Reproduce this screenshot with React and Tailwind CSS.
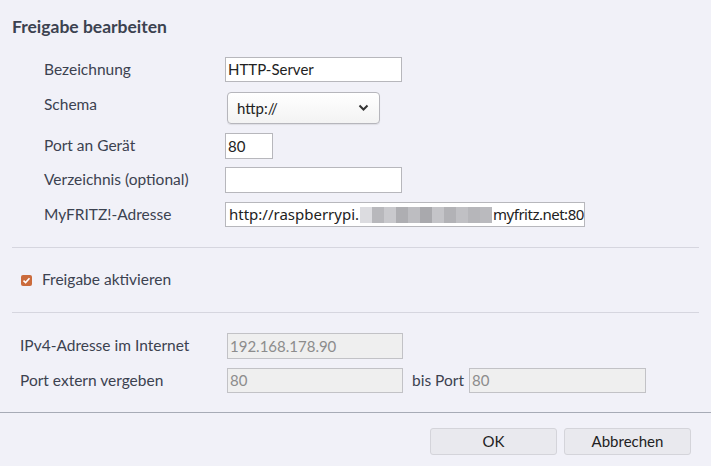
import React from "react";

function Label({ children, className = "" }) {
  return <div className={`text-[15.5px] text-[#3c4250] ${className}`}>{children}</div>;
}

function TextBox({ value, className = "", disabled }) {
  return (
    <div
      className={`border flex items-center px-[2px] text-[15px] ${
        disabled
          ? "bg-[#efefef] border-[#c2c2c6] text-[#8c8c8c]"
          : "bg-white border-[#b7b7bc] text-[#222]"
      } ${className}`}
    >
      {value}
    </div>
  );
}

function Pixelated() {
  const blocks = [
    "bg-[#dcdce0]",
    "bg-[#b8b8bc]",
    "bg-[#c9c9cd]",
    "bg-[#aeaeb2]",
    "bg-[#bdbdc1]",
    "bg-[#a9a9ad]",
    "bg-[#c4c4c8]",
    "bg-[#b2b2b6]",
    "bg-[#c0c0c4]",
    "bg-[#b6b6ba]",
    "bg-[#bababe]",
  ];
  return (
    <div className="flex h-[16px] mx-[1px]">
      {blocks.map((b, i) => (
        <div key={i} className={`w-[12px] h-full ${b}`} />
      ))}
    </div>
  );
}

export default function App() {
  return (
    <div
      className="w-[711px] h-[466px] bg-[#f1f1f8] text-[#3c4250] overflow-hidden"
      style={{ fontFamily: '"Source Sans Pro", Lato, "Noto Sans", sans-serif' }}
    >
      <div className="h-[44px] pt-[15px] pl-[12px] text-[17.5px] font-bold leading-[24px]">
        Freigabe bearbeiten
      </div>

      <div className="pl-[44px] pt-[13px] flex flex-col">
        <div className="flex items-center h-[25px]">
          <Label className="w-[181px]">Bezeichnung</Label>
          <TextBox value="HTTP-Server" className="w-[177px] h-[25px]" />
        </div>

        <div className="flex items-center h-[32px] mt-[10px]">
          <Label className="w-[183px] -mt-[6px]">Schema</Label>
          <div className="w-[153px] h-[32px] rounded-[4px] border border-[#b6b6bc] bg-gradient-to-b from-white to-[#f3f3f3] flex items-center justify-between pl-[9px] pr-[10px] text-[15px] text-[#222] shadow-[0_1px_1px_rgba(0,0,0,0.08)]">
            <span>http://</span>
            <svg width="11" height="8" viewBox="0 0 11 8">
              <path d="M1.5 1.5 L5.5 5.5 L9.5 1.5" fill="none" stroke="#333" strokeWidth="2" />
            </svg>
          </div>
        </div>

        <div className="flex items-center h-[26px] mt-[9px]">
          <Label className="w-[181px] -mt-[1px]">Port an Gerät</Label>
          <TextBox value="80" className="w-[48px] h-[26px]" />
        </div>

        <div className="flex items-center h-[26px] mt-[8px]">
          <Label className="w-[181px]">Verzeichnis (optional)</Label>
          <TextBox value="" className="w-[177px] h-[26px]" />
        </div>

        <div className="flex items-center h-[25px] mt-[9px]">
          <Label className="w-[181px]">MyFRITZ!-Adresse</Label>
          <div
            className="w-[360px] h-[25px] border border-[#b7b7bc] bg-white flex items-center px-[3px] text-[15px] text-[#222]"
            style={{ fontFamily: '"Noto Sans", sans-serif' }}
          >
            <span>http://raspberrypi.</span>
            <Pixelated />
            <span className="tracking-[-0.5px]">myfritz.net:80</span>
          </div>
        </div>
      </div>

      <div className="mx-[12px] mt-[20px] border-t border-[#d6d6df]" />

      <div className="pl-[21px] h-[64px] flex items-center gap-[10px]">
        <div className="w-[11px] h-[11px] rounded-[2px] bg-[#cb6b3c] flex items-center justify-center">
          <svg width="9" height="9" viewBox="0 0 9 9">
            <path d="M1.5 4.6 L3.6 6.6 L7.5 2.2" fill="none" stroke="white" strokeWidth="1.6" />
          </svg>
        </div>
        <span className="text-[15.5px]">Freigabe aktivieren</span>
      </div>

      <div className="mx-[12px] border-t border-[#d6d6df]" />

      <div className="pl-[20px] pt-[20px] flex flex-col gap-[9px]">
        <div className="flex items-center h-[26px]">
          <Label className="w-[207px]">IPv4-Adresse im Internet</Label>
          <TextBox value="192.168.178.90" className="w-[176px] h-[26px]" disabled />
        </div>
        <div className="flex items-center h-[25px]">
          <Label className="w-[207px]">Port extern vergeben</Label>
          <TextBox value="80" className="w-[176px] h-[25px]" disabled />
          <Label className="ml-[9px] w-[57px]">bis Port</Label>
          <TextBox value="80" className="w-[177px] h-[25px]" disabled />
        </div>
      </div>

      <div className="mt-[19px] border-t border-[#a7abb6]" />

      <div className="flex justify-end gap-[7px] pr-[20px] pt-[15px]">
        <button className="w-[127px] h-[27px] rounded-[3px] border border-[#d4d4da] bg-[#e9e9ee] text-[15px] text-[#222]">
          OK
        </button>
        <button className="w-[127px] h-[27px] rounded-[3px] border border-[#d4d4da] bg-[#e9e9ee] text-[15px] text-[#222]">
          Abbrechen
        </button>
      </div>
    </div>
  );
}
